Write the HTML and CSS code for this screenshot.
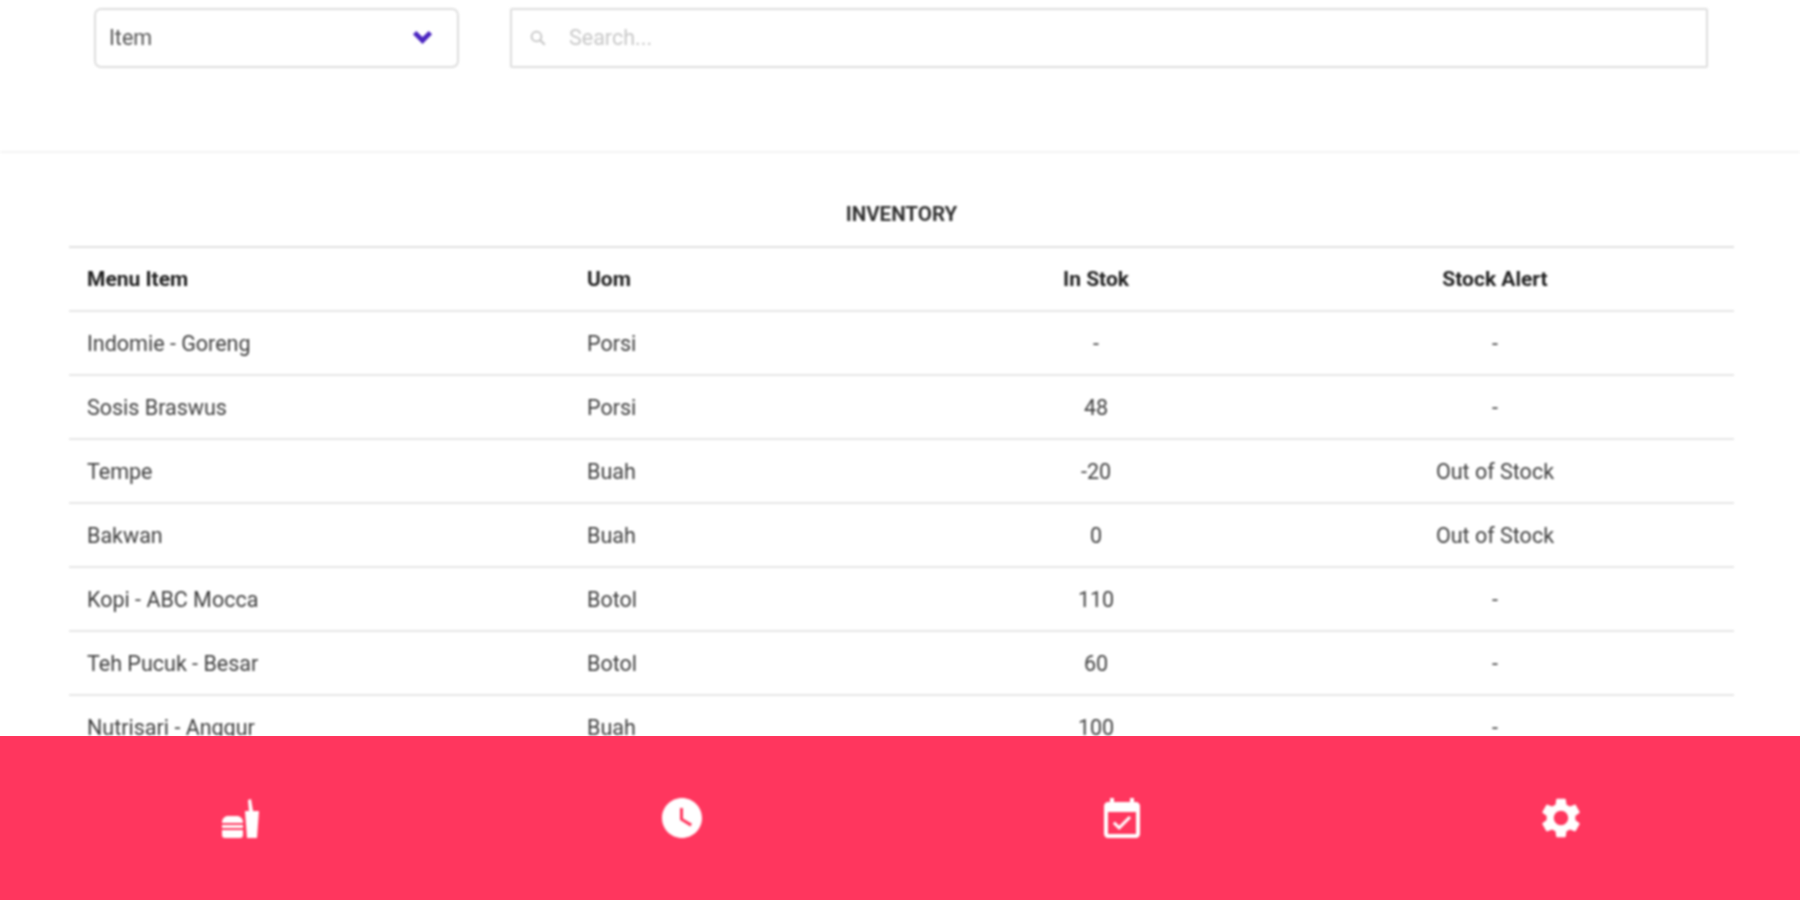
FILE: index.html
```html
<!DOCTYPE html>
<html lang="en">
<head>
  <meta charset="UTF-8">
  <title>Inventory</title>
  <link rel="stylesheet" href="styles.css">
</head>
<body>
  <div class="app">
    <div class="filter-bar">
      <div class="select-box">
        <span>Item</span>
        <svg class="chevron" viewBox="0 0 24 16"><path d="M3 3l9 9 9-9" fill="none" stroke="#4a25c0" stroke-width="5.5"/></svg>
      </div>
      <div class="search-box">
        <svg class="search-icon" viewBox="0 0 24 24"><circle cx="10" cy="10" r="6.5" fill="none" stroke="#c4c4c4" stroke-width="2.5"/><path d="M15 15l6 6" stroke="#c4c4c4" stroke-width="2.5"/></svg>
        <span>Search...</span>
      </div>
    </div>

    <div class="content">
      <h1>INVENTORY</h1>
      <table>
        <thead>
          <tr><th class="col-item">Menu Item</th><th class="col-uom">Uom</th><th class="col-stock mid">In Stok</th><th class="mid">Stock Alert</th></tr>
        </thead>
        <tbody>
          <tr><td>Indomie - Goreng</td><td>Porsi</td><td class="mid">-</td><td class="mid">-</td></tr>
          <tr><td>Sosis Braswus</td><td>Porsi</td><td class="mid">48</td><td class="mid">-</td></tr>
          <tr><td>Tempe</td><td>Buah</td><td class="mid">-20</td><td class="mid">Out of Stock</td></tr>
          <tr><td>Bakwan</td><td>Buah</td><td class="mid">0</td><td class="mid">Out of Stock</td></tr>
          <tr><td>Kopi - ABC Mocca</td><td>Botol</td><td class="mid">110</td><td class="mid">-</td></tr>
          <tr><td>Teh Pucuk - Besar</td><td>Botol</td><td class="mid">60</td><td class="mid">-</td></tr>
          <tr><td>Nutrisari - Anggur</td><td>Buah</td><td class="mid">100</td><td class="mid">-</td></tr>
        </tbody>
      </table>
    </div>

    <div class="tab-bar">
      <div class="tab">
        <svg class="tab-food" viewBox="0 0 38 40" fill="#fff">
          <path d="M23 13h14l-2 27H25z"/>
          <path d="M27 13l-1-11 3-1 2 12z"/>
          <path d="M0 25c0-5 3-7 6-7h9c3 0 6 2 6 7z"/>
          <rect x="0" y="27" width="21" height="3"/>
          <path d="M0 32h21v5c0 2-1 3-3 3H3c-2 0-3-1-3-3z"/>
        </svg>
      </div>
      <div class="tab">
        <svg class="tab-icon" viewBox="2 2 20 20" fill="#fff"><path d="M12 2C6.5 2 2 6.5 2 12s4.5 10 10 10 10-4.5 10-10S17.5 2 12 2zm4.2 14.2L11 13V7h1.5v5.2l4.5 2.7-.8 1.3z"/></svg>
      </div>
      <div class="tab">
        <svg class="tab-calendar" viewBox="3 1 18 20" fill="#fff"><path d="M16.53 11.06L15.47 10l-4.88 4.88-2.12-2.12-1.06 1.06L10.59 17l5.94-5.94zM19 3h-1V1h-2v2H8V1H6v2H5c-1.11 0-1.99.9-1.99 2L3 19c0 1.1.89 2 2 2h14c1.1 0 2-.9 2-2V5c0-1.1-.9-2-2-2zm0 16H5V8h14v11z"/></svg>
      </div>
      <div class="tab">
        <svg class="tab-icon" viewBox="2.4 2 19.2 20" fill="#fff"><path d="M19.14 12.94c.04-.3.06-.61.06-.94 0-.32-.02-.64-.07-.94l2.03-1.58c.18-.14.23-.41.12-.61l-1.92-3.32c-.12-.22-.37-.29-.59-.22l-2.39.96c-.5-.38-1.03-.7-1.62-.94l-.36-2.54c-.04-.24-.24-.41-.48-.41h-3.84c-.24 0-.43.17-.47.41l-.36 2.54c-.59.24-1.13.57-1.62.94l-2.39-.96c-.22-.08-.47 0-.59.22L2.74 8.87c-.12.21-.08.47.12.61l2.03 1.58c-.05.3-.09.63-.09.94s.02.64.07.94l-2.03 1.58c-.18.14-.23.41-.12.61l1.92 3.32c.12.22.37.29.59.22l2.39-.96c.5.38 1.03.7 1.62.94l.36 2.54c.05.24.24.41.48.41h3.84c.24 0 .44-.17.47-.41l.36-2.54c.59-.24 1.13-.56 1.62-.94l2.39.96c.22.08.47 0 .59-.22l1.92-3.32c.12-.22.07-.47-.12-.61l-2.01-1.58zM12 15.6c-1.98 0-3.6-1.62-3.6-3.6s1.62-3.6 3.6-3.6 3.6 1.62 3.6 3.6-1.62 3.6-3.6 3.6z"/></svg>
      </div>
    </div>
  </div>
</body>
</html>
```

FILE: styles.css
```css
* {
  box-sizing: border-box;
}

html, body {
  margin: 0;
  padding: 0;
  height: 100%;
  overflow: hidden;
  background-color: #fff;
}

body {
  font-family: Roboto, 'Liberation Sans', sans-serif;
  color: #3f3f3f;
}

.app {
  height: 900px;
  display: flex;
  flex-direction: column;
}

/* the source picture is soft, so everything but the red fill gets a slight blur */
.filter-bar,
.content,
.tab svg {
  filter: blur(1px);
}

.filter-bar {
  flex: 0 0 153px;
  display: flex;
  gap: 51px;
  padding: 8px 92px 0 94px;
  border-bottom: 2px solid #f4f4f4;
}

.select-box {
  flex: 0 0 365px;
  height: 60px;
  display: flex;
  align-items: center;
  justify-content: space-between;
  padding: 0 24px 0 13px;
  border: 2px solid #dedede;
  border-radius: 7px;
  font-size: 21.5px;
  color: #555;
}

.select-box span {
  margin-bottom: 2px;
}

.chevron {
  width: 21px;
  height: 14px;
  margin-bottom: 2px;
}

.search-box {
  flex: 1;
  height: 60px;
  display: flex;
  align-items: center;
  padding-left: 17px;
  border: 2px solid #dedede;
  border-radius: 2px;
  font-size: 21.5px;
  color: #c8c8c8;
}

.search-box span {
  margin-bottom: 2px;
}

.search-icon {
  width: 18px;
  height: 18px;
  margin-right: 22px;
}

.content {
  flex: 1;
  min-height: 0;
  overflow: hidden;
  padding: 0 66px 0 69px;
}

h1 {
  margin: 0;
  height: 93px;
  line-height: 122px;
  text-align: center;
  font-size: 20.5px;
  font-weight: 700;
  color: #333;
}

table {
  width: 100%;
  table-layout: fixed;
  border-collapse: collapse;
  border-top: 2px solid #e0e0e0;
}

th, td {
  height: 64px;
  padding: 0 18px;
  text-align: left;
  font-size: 21.5px;
  font-weight: 400;
  border-bottom: 2px solid #e6e6e6;
}

th {
  font-size: 21px;
  font-weight: 700;
  color: #222;
}

.mid {
  text-align: center;
}

.col-item {
  width: 500px;
}

.col-uom {
  width: 367px;
}

.col-stock {
  width: 320px;
}

.tab-bar {
  position: relative;
  flex: 0 0 164px;
  display: grid;
  grid-template-columns: repeat(4, 1fr);
  padding: 0 19px 0 23px;
  background-color: #ff365e;
}

.tab {
  display: flex;
  align-items: center;
  justify-content: center;
  padding-bottom: 1px;
}

.tab-icon {
  width: 40px;
  height: 40px;
}

.tab-calendar {
  width: 36px;
  height: 42px;
}

.tab-food {
  width: 38px;
  height: 40px;
  margin-right: 4px;
}
```
